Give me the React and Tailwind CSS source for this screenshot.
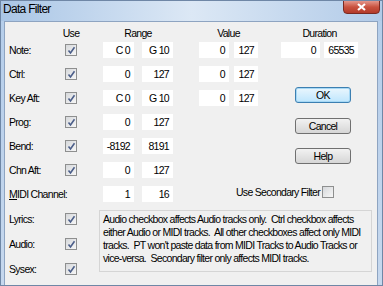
import React from 'react';

const rows = [
  { label: 'Note:', range: ['C 0', 'G 10'], value: ['0', '127'] },
  { label: 'Ctrl:', range: ['0', '127'], value: ['0', '127'] },
  { label: 'Key Aft:', range: ['C 0', 'G 10'], value: ['0', '127'] },
  { label: 'Prog:', range: ['0', '127'] },
  { label: 'Bend:', range: ['-8192', '8191'] },
  { label: 'Chn Aft:', range: ['0', '127'] },
  { label: 'MIDI Channel:', range: ['1', '16'], noCheck: true },
];

const rowStart = ['row-start-2', 'row-start-3', 'row-start-4', 'row-start-5', 'row-start-6', 'row-start-7', 'row-start-8'];

const Check = ({ checked = true }) => (
  <div className="w-[12px] h-[12px] border border-[#8e8f8f] bg-linear-to-br from-[#d6d8db] to-[#f7f7f7] flex items-center justify-center">
    {checked && (
      <svg width="9" height="9" viewBox="0 0 9 9">
        <path d="M1.5 4.5 L3.5 7 L7.5 1.2" fill="none" stroke="#4c5f8a" strokeWidth="1.6" />
      </svg>
    )}
  </div>
);

const Box = ({ w, children }) => (
  <div className={`${w} h-[16px] bg-white text-right pr-[4px] leading-[16px] whitespace-nowrap`}>{children}</div>
);

const Button = ({ children, primary, className = '' }) => (
  <div
    className={`w-[56px] h-[16px] rounded-[3px] border text-center leading-[14px] ${
      primary
        ? 'border-[#3c7fb1] bg-linear-to-b from-[#eaf6fd] to-[#bee6fd] shadow-[inset_0_0_0_1px_#a6d8f5]'
        : 'border-[#707070] bg-linear-to-b from-[#f2f2f2] to-[#d6d6d6]'
    } ${className}`}
  >
    {children}
  </div>
);

export default function App() {
  return (
    <div className="w-[383px] h-[286px] flex flex-col bg-linear-to-b from-[#b4cdea] to-[#c6d8ee] border border-[#6f87a6] text-[10.5px] tracking-[-0.7px] text-black font-['Liberation_Sans',Arial,sans-serif] overflow-hidden">
      {/* Title bar */}
      <div className="relative h-[20px] shrink-0 bg-linear-to-r from-[#aac6e6] via-[#dce8f5] to-[#b2cbe8]">
        <span className="absolute left-[2px] top-[1px] text-[12px] leading-[14px]">Data Filter</span>
        <div className="absolute right-[2px] -top-px w-[37px] h-[14px] rounded-b-[4px] border border-[#7a2a22] bg-linear-to-b from-[#e3968b] via-[#c9523f] to-[#b33a2a] flex items-center justify-center">
          <svg width="9" height="8" viewBox="0 0 9 8">
            <path d="M1 1 L8 7 M8 1 L1 7" stroke="white" strokeWidth="2.2" />
          </svg>
        </div>
      </div>

      {/* Client area */}
      <div className="flex-1 ml-[3px] mr-[4px] mb-[4px] border border-[#8ea4c1] bg-[#f0f0f0] flex flex-col">
        <div className="grid grid-cols-[60px_38px_39px_57px_35px_47px_1fr] grid-rows-[20px_repeat(7,24px)]">
          {/* Header */}
          <div className="row-start-1 col-start-2 pt-[3px] leading-[16px] w-[12px] flex justify-center whitespace-nowrap">Use</div>
          <div className="row-start-1 col-start-3 col-span-2 pt-[3px] leading-[16px] w-[70px] text-center">Range</div>
          <div className="row-start-1 col-start-5 col-span-2 pt-[3px] leading-[16px] w-[59px] text-center">Value</div>
          <div className="row-start-1 col-start-7 pt-[3px] leading-[16px] w-[77px] text-center">Duration</div>

          {rows.map((r, i) => (
            <React.Fragment key={r.label}>
              <div className={`${rowStart[i]} col-start-1 pl-[4px] leading-[16px] whitespace-nowrap`}>
                {r.noCheck ? (
                  <>
                    <span className="underline">M</span>IDI Channel:
                  </>
                ) : (
                  r.label
                )}
              </div>
              {!r.noCheck && (
                <div className={`${rowStart[i]} col-start-2 pt-[2px]`}>
                  <Check />
                </div>
              )}
              <div className={`${rowStart[i]} col-start-3`}>
                <Box w="w-[31px]">{r.range[0]}</Box>
              </div>
              <div className={`${rowStart[i]} col-start-4`}>
                <Box w="w-[31px]">{r.range[1]}</Box>
              </div>
              {r.value && (
                <>
                  <div className={`${rowStart[i]} col-start-5`}>
                    <Box w="w-[30px]">{r.value[0]}</Box>
                  </div>
                  <div className={`${rowStart[i]} col-start-6`}>
                    <Box w="w-[24px]">{r.value[1]}</Box>
                  </div>
                </>
              )}
            </React.Fragment>
          ))}

          {/* Duration */}
          <div className="row-start-2 col-start-7 flex gap-[4px]">
            <Box w="w-[39px]">0</Box>
            <Box w="w-[34px]">65535</Box>
          </div>

          {/* Buttons */}
          <div className="row-start-3 row-span-5 col-start-7 flex flex-col pl-[14px]">
            <Button primary className="mt-[21px]">OK</Button>
            <Button className="mt-[15px]">Cancel</Button>
            <Button className="mt-[14px]">Help</Button>
          </div>

          {/* Secondary filter */}
          <div className="row-start-8 col-start-5 col-span-3 flex justify-end items-start pr-[43px]">
            <span className="leading-[12px] mr-[2px] whitespace-nowrap">Use Secondary Filter</span>
            <Check checked={false} />
          </div>
        </div>

        {/* Bottom */}
        <div className="flex">
          <div className="w-[94px] pt-[3px] flex flex-col">
            {['Lyrics:', 'Audio:', 'Sysex:'].map((l) => (
              <div key={l} className="h-[25px] flex items-start">
                <div className="w-[60px] pl-[4px] leading-[12px]">{l}</div>
                <Check />
              </div>
            ))}
          </div>
          <div className="w-[273px] h-[62px] border border-[#d5d5d5] pl-[3px] pt-[2px] leading-[13px] whitespace-nowrap">
            Audio checkbox affects Audio tracks only.&nbsp; Ctrl checkbox affects
            <br />
            either Audio or MIDI tracks.&nbsp; All other checkboxes affect only MIDI
            <br />
            tracks.&nbsp; PT won't paste data from MIDI Tracks to Audio Tracks or
            <br />
            vice-versa.&nbsp; Secondary filter only affects MIDI tracks.
          </div>
        </div>
      </div>
    </div>
  );
}
